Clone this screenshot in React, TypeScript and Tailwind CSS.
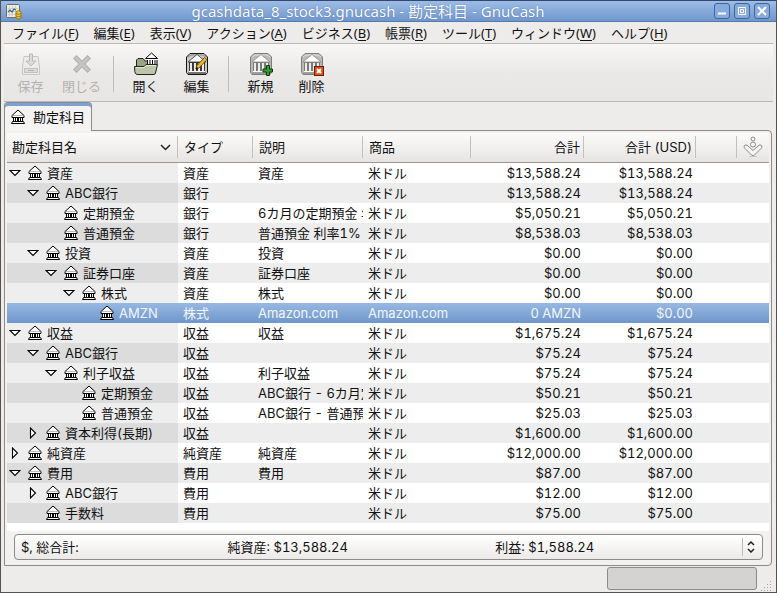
import React from "react"

interface Account {
  name: string
  depth: number
  state: "open" | "closed" | "leaf"
  type: string
  description: string
  commodity: string
  total: string
  totalUsd: string
}

const USD = "米ドル"

const accounts: Account[] = [
  { name: "資産", depth: 0, state: "open", type: "資産", description: "資産", commodity: USD, total: "$13,588.24", totalUsd: "$13,588.24" },
  { name: "ABC銀行", depth: 1, state: "open", type: "銀行", description: "", commodity: USD, total: "$13,588.24", totalUsd: "$13,588.24" },
  { name: "定期預金", depth: 2, state: "leaf", type: "銀行", description: "6カ月の定期預金 年", commodity: USD, total: "$5,050.21", totalUsd: "$5,050.21" },
  { name: "普通預金", depth: 2, state: "leaf", type: "銀行", description: "普通預金 利率1%", commodity: USD, total: "$8,538.03", totalUsd: "$8,538.03" },
  { name: "投資", depth: 1, state: "open", type: "資産", description: "投資", commodity: USD, total: "$0.00", totalUsd: "$0.00" },
  { name: "証券口座", depth: 2, state: "open", type: "資産", description: "証券口座", commodity: USD, total: "$0.00", totalUsd: "$0.00" },
  { name: "株式", depth: 3, state: "open", type: "資産", description: "株式", commodity: USD, total: "$0.00", totalUsd: "$0.00" },
  { name: "AMZN", depth: 4, state: "leaf", type: "株式", description: "Amazon.com", commodity: "Amazon.com", total: "0 AMZN", totalUsd: "$0.00" },
  { name: "収益", depth: 0, state: "open", type: "収益", description: "収益", commodity: USD, total: "$1,675.24", totalUsd: "$1,675.24" },
  { name: "ABC銀行", depth: 1, state: "open", type: "収益", description: "", commodity: USD, total: "$75.24", totalUsd: "$75.24" },
  { name: "利子収益", depth: 2, state: "open", type: "収益", description: "利子収益", commodity: USD, total: "$75.24", totalUsd: "$75.24" },
  { name: "定期預金", depth: 3, state: "leaf", type: "収益", description: "ABC銀行 - 6カ月定", commodity: USD, total: "$50.21", totalUsd: "$50.21" },
  { name: "普通預金", depth: 3, state: "leaf", type: "収益", description: "ABC銀行 - 普通預", commodity: USD, total: "$25.03", totalUsd: "$25.03" },
  { name: "資本利得(長期)", depth: 1, state: "closed", type: "収益", description: "", commodity: USD, total: "$1,600.00", totalUsd: "$1,600.00" },
  { name: "純資産", depth: 0, state: "closed", type: "純資産", description: "純資産", commodity: USD, total: "$12,000.00", totalUsd: "$12,000.00" },
  { name: "費用", depth: 0, state: "open", type: "費用", description: "費用", commodity: USD, total: "$87.00", totalUsd: "$87.00" },
  { name: "ABC銀行", depth: 1, state: "closed", type: "費用", description: "", commodity: USD, total: "$12.00", totalUsd: "$12.00" },
  { name: "手数料", depth: 1, state: "leaf", type: "費用", description: "", commodity: USD, total: "$75.00", totalUsd: "$75.00" },
]

const menus = [
  { label: "ファイル", mnemonic: "F" },
  { label: "編集", mnemonic: "E" },
  { label: "表示", mnemonic: "V" },
  { label: "アクション", mnemonic: "A" },
  { label: "ビジネス", mnemonic: "B" },
  { label: "帳票", mnemonic: "R" },
  { label: "ツール", mnemonic: "T" },
  { label: "ウィンドウ", mnemonic: "W" },
  { label: "ヘルプ", mnemonic: "H" },
]

const BankIcon = () => (
  <svg width="14" height="16" viewBox="0 0 14 16" className="shrink-0" aria-hidden="true">
    <path d="M7 1 L13 6.5 V8.5 H1 V6.5 Z" fill="#fff" stroke="#000" />
    <path d="M1 6.5 H13" stroke="#777" strokeWidth="0.5" />
    <path d="M2 9 H12 V13 H2 Z" fill="#fff" />
    <path d="M2.5 9 V13 M4.5 9 V13 M6.5 9 V13 M7.5 9 V13 M9.5 9 V13 M11.5 9 V13" stroke="#000" />
    <path d="M1.5 12.5 H12.5 L13.5 14.5 H0.5 Z" fill="#fff" stroke="#000" />
  </svg>
)

const Expander = ({ state }: { state: Account["state"] }) => {
  if (state === "leaf") return <span className="w-3 shrink-0" />
  return (
    <button type="button" className="w-3 h-3 shrink-0" aria-label={state === "open" ? "閉じる" : "開く"}>
      <svg width="12" height="12" viewBox="0 0 12 12" fill="#fff" stroke="#000" strokeWidth="1.1">
        {state === "open" ? <path d="M1 3.5 H11 L6 8.5 Z" /> : <path d="M3.5 1 V11 L8.5 6 Z" />}
      </svg>
    </button>
  )
}

const AppIcon = () => (
  <svg width="17" height="17" viewBox="0 0 17 17" className="shrink-0" aria-hidden="true">
    <rect x="1.5" y="1.5" width="13" height="13" rx="1" fill="#ecebe4" stroke="#6d6d66" />
    <path d="M4.5 3 V13 M7.5 3 V13 M10.5 3 V13 M3 5.5 H13 M3 8.5 H13 M3 11.5 H13" stroke="#cfcec7" />
    <path d="M3 9 L5 7 L7 9 L9 6 L11 7" fill="none" stroke="#3465a4" strokeWidth="1.2" />
    <path d="M11 8.5 Q13.5 7 16 8.5 V15 Q13.5 17 11 15 Z" fill="#edc52f" stroke="#8f6d0c" strokeWidth="0.8" />
    <path d="M11 10.5 Q13.5 12 16 10.5 M11 13 Q13.5 14.5 16 13" fill="none" stroke="#8f6d0c" strokeWidth="0.8" />
  </svg>
)

const SaveIcon = () => (
  <svg width="24" height="24" viewBox="0 0 24 24" aria-hidden="true">
    <path d="M5 4.5 H19 L20.5 15 V22.5 H3.5 V15 Z" fill="#ecebea" stroke="#c9c7c5" />
    <rect x="5.5" y="16.5" width="13" height="4" fill="#dddbd9" stroke="#c3c1bf" />
    <path d="M9 18.5 H15" stroke="#b5b3b1" />
    <path d="M10.5 2 H13.5 V9 H17 L12 14 L7 9 H10.5 Z" fill="#dcdad8" stroke="#bbb9b7" />
  </svg>
)

const CloseIcon = () => (
  <svg width="24" height="24" viewBox="0 0 24 24" aria-hidden="true">
    <path d="M6.5 6.5 L17.5 17.5 M17.5 6.5 L6.5 17.5" stroke="#b3b1af" strokeWidth="5" strokeLinecap="square" />
    <path d="M6.5 6.5 L17.5 17.5 M17.5 6.5 L6.5 17.5" stroke="#c6c4c2" strokeWidth="3" strokeLinecap="square" />
  </svg>
)

const OpenIcon = () => (
  <svg width="26" height="24" viewBox="0 0 26 24" aria-hidden="true">
    <path d="M3.5 21 V8 L5 6.5 H10 L12 9 H22 V21 Z" fill="#9aa387" stroke="#20241a" />
    <rect x="14" y="7" width="10" height="6" fill="#fff" />
    <path d="M18.5 1 L24.5 6.5 H12.5 Z" fill="#fff" stroke="#000" />
    <path d="M14.5 8 V13 M17 8 V13 M19.5 8 V13 M22 8 V13 M24 8 V12" stroke="#000" />
    <path d="M4 22.5 Q2 22 1.8 19.5 L1.5 14.5 H11 L13 12.5 H24.5 L22.5 21 Q22 22.5 21 22.5 Z" fill="#bcc4a9" stroke="#20241a" />
    <path d="M3 15.5 H11.5 L13.5 13.5 H23" fill="none" stroke="#e5e9da" />
  </svg>
)

const AccountIcon = ({ dark, children }: { dark?: boolean; children?: React.ReactNode }) => (
  <svg width="24" height="24" viewBox="0 0 24 24" aria-hidden="true">
    <path
      d="M5 1.5 H19 L22.5 5 V20.5 L21 22.5 H3 L1.5 20.5 V5 Z"
      fill={dark ? "#c9c9c7" : "#b9b9b7"}
      stroke={dark ? "#151515" : "#7c7c7a"}
    />
    <path d="M3 5 L6 3 H18 L21 5" fill="none" stroke={dark ? "#8a8a88" : "#dededc"} />
    <path d="M4 10 H20 V20 H4 Z" fill={dark ? "#3a3a3a" : "#7a7a78"} />
    <path d="M12 2.5 L21 10 H3 Z" fill="#fff" stroke={dark ? "#333" : "#8a8a88"} strokeWidth="0.8" />
    <path d="M6 11 V19 M10 11 V19 M14 11 V19 M18 11 V19" stroke="#ececea" strokeWidth="2" />
    <path d="M4 19.5 H20" stroke="#fff" />
    <path d="M3 21 H21" stroke={dark ? "#222" : "#868684"} />
    {children}
  </svg>
)

const EditIcon = () => (
  <AccountIcon dark>
    <path d="M11.5 14 L19.5 5.5 L22 7.5 L14 16 L11 17 Z" fill="#f0b82c" stroke="#5a3c00" strokeWidth="0.8" />
    <path d="M11 17 L12.5 15.5" stroke="#000" strokeWidth="1.5" />
  </AccountIcon>
)

const NewIcon = () => (
  <AccountIcon>
    <path d="M17.5 13.5 H20.5 V17 H23.5 V20 H20.5 V23.5 H17.5 V20 H14 V17 H17.5 Z" fill="#3c9a35" stroke="#0b3a08" />
  </AccountIcon>
)

const DeleteIcon = () => (
  <AccountIcon>
    <rect x="14.5" y="14.5" width="9" height="9" fill="#d9541e" stroke="#6d1f00" />
    <path d="M17 17 L21 21 M21 17 L17 21" stroke="#fff" strokeWidth="2" />
  </AccountIcon>
)

interface ToolButtonProps {
  label: string
  icon: React.ReactNode
  disabled?: boolean
}

const ToolButton = ({ label, icon, disabled }: ToolButtonProps) => (
  <button type="button" disabled={disabled} className="w-[51px] flex flex-col items-center disabled:text-[#b4b2b0]">
    {icon}
    <span className="leading-5">{label}</span>
  </button>
)

const ToolSeparator = () => <span className="w-px h-9 mx-1.5 mt-1 bg-[#c0bebc]" />

const WindowButton = ({ label, children }: { label: string; children: React.ReactNode }) => (
  <button
    type="button"
    aria-label={label}
    className="w-4 h-4 flex items-center justify-center rounded-[3px] border border-[#3f6498] bg-[#86abdc]"
  >
    <svg width="12" height="12" viewBox="0 0 12 12" fill="none" stroke="#fff">
      {children}
    </svg>
  </button>
)

const HeaderCell = ({ children, className = "" }: { children?: React.ReactNode; className?: string }) => (
  <th scope="col" className="p-0 font-normal">
    <div className={`h-[22px] flex items-center border-r border-[#c2c0be] whitespace-nowrap ${className}`}>{children}</div>
  </th>
)

const AccountRow = ({ account, index }: { account: Account; index: number }) => {
  const selected = account.name === "AMZN"
  const striped = index % 2 === 1
  const indents = ["pl-0.5", "pl-5", "pl-[38px]", "pl-14", "pl-[74px]"]

  const rowColor = selected
    ? "bg-linear-to-b from-[#97b8e2] to-[#7096ca] text-[#f2f6fc]"
    : striped
      ? "bg-[#ededed]"
      : "bg-white"
  const nameColor = selected ? "" : striped ? "bg-[#dcdcdc]" : "bg-[#eeeeee]"

  return (
    <tr className={`h-5 ${rowColor}`} aria-selected={selected}>
      <td className={`p-0 ${nameColor}`}>
        <div className={`flex items-center ${indents[account.depth]}`}>
          <Expander state={account.state} />
          <span className="w-[7px]" />
          <BankIcon />
          <span className="ml-[5px] whitespace-nowrap">{account.name}</span>
        </div>
      </td>
      <td className="p-0 pl-[5px] whitespace-nowrap">{account.type}</td>
      <td className="p-0 pl-[5px] overflow-hidden whitespace-nowrap">{account.description}</td>
      <td className="p-0 pl-[5px] whitespace-nowrap">{account.commodity}</td>
      <td className="p-0 pr-[3px] text-right whitespace-nowrap">{account.total}</td>
      <td className="p-0 pr-[3px] text-right whitespace-nowrap">{account.totalUsd}</td>
      <td className="p-0" />
      <td className="p-0" />
    </tr>
  )
}

const SummaryBar = () => (
  <div className="ml-[9px] mr-2 mt-[3px] mb-[5px] grid">
    <select
      aria-label="総合計"
      className="[grid-area:1/1] h-[26px] appearance-none rounded-[4px] border border-[#8d8a87] bg-linear-to-b from-white to-[#eceae8] text-transparent"
    >
      <option>$, 総合計</option>
    </select>
    <div className="[grid-area:1/1] pointer-events-none flex items-center pl-[7px] pr-2">
      <div className="flex-1 grid grid-cols-[206fr_267fr_246fr]">
        <span>$, 総合計:</span>
        <span>純資産: $13,588.24</span>
        <span>利益: $1,588.24</span>
      </div>
      <span className="w-px h-[18px] bg-[#bdbab8]" />
      <svg width="8" height="12" viewBox="0 0 8 12" className="ml-1" fill="none" stroke="#222" strokeWidth="1.5">
        <path d="M1 4 L4 1 L7 4 M1 8 L4 11 L7 8" />
      </svg>
    </div>
  </div>
)

export default function App() {
  return (
    <div className="min-h-screen flex flex-col border border-t-[#35486b] border-[#555250] bg-[#edecea] text-[13px] leading-5 text-[#111] font-[Inter,'Noto_Sans_CJK_JP',sans-serif] tabular-nums">
      {/* Title bar */}
      <header className="h-[21px] flex items-center pl-1 pr-1.5 bg-linear-to-b from-[#9dbde8] to-[#7096cb] border-b border-[#5279b0]">
        <AppIcon />
        <h1 className="flex-1 text-center text-[15px] leading-5 text-white font-['Noto_Sans','Noto_Sans_CJK_JP',sans-serif] text-shadow-[0_0_1px_#35588c]">
          gcashdata_8_stock3.gnucash - 勘定科目 - GnuCash
        </h1>
        <div className="flex gap-1">
          <WindowButton label="最小化">
            <path d="M2 8.5 H10" strokeWidth="2" />
          </WindowButton>
          <WindowButton label="最大化">
            <path d="M2.5 2.5 H9.5 V9.5 H2.5 Z M4.5 4.5 H7.5 V7.5 H4.5 Z" />
          </WindowButton>
          <WindowButton label="閉じる">
            <path d="M2 2 L10 10 M10 2 L2 10" strokeWidth="2" />
          </WindowButton>
        </div>
      </header>

      <div className="flex-1 flex flex-col px-[3px]">
        {/* Menu bar */}
        <nav className="h-[22px] flex items-center gap-px pl-px border-b border-[#bbb9b7] font-['Noto_Sans','Noto_Sans_CJK_JP',sans-serif]">
          {menus.map((menu) => (
            <button key={menu.mnemonic} type="button" className="px-[7px] whitespace-nowrap">
              {menu.label}(<u className="underline-offset-2">{menu.mnemonic}</u>)
            </button>
          ))}
        </nav>

        {/* Toolbar */}
        <div role="toolbar" className="h-[58px] flex items-start pt-2 pl-px bg-linear-to-b from-[#f7f7f5] via-[#ebe9e8] to-[#e8e6e5] border-b border-[#bbb9b7]">
          <ToolButton label="保存" icon={<SaveIcon />} disabled />
          <ToolButton label="閉じる" icon={<CloseIcon />} disabled />
          <ToolSeparator />
          <ToolButton label="開く" icon={<OpenIcon />} />
          <ToolButton label="編集" icon={<EditIcon />} />
          <ToolSeparator />
          <ToolButton label="新規" icon={<NewIcon />} />
          <ToolButton label="削除" icon={<DeleteIcon />} />
        </div>

        {/* Tabs */}
        <div role="tablist" className="flex">
          <button
            type="button"
            role="tab"
            aria-selected="true"
            className="h-[29px] -mb-px z-10 flex items-center gap-2 px-1.5 border border-b-0 border-[#8d8a87] rounded-t-[4px] bg-[#f4f3f2] shadow-[inset_0_3px_0_#7ba0d4]"
          >
            <BankIcon />
            <span>勘定科目</span>
          </button>
        </div>

        <main className="mr-px border border-[#8d8a87] rounded-r-[4px] bg-[#f2f1f0] pt-0.5">
          <div className="mx-0.5 pb-2 bg-white">
            <table className="w-full table-fixed border-collapse">
              <colgroup>
                <col />
                <col className="w-[75px]" />
                <col className="w-[110px]" />
                <col className="w-[108px]" />
                <col className="w-[113px]" />
                <col className="w-[112px]" />
                <col className="w-[41px]" />
                <col className="w-8" />
              </colgroup>
              <thead className="bg-linear-to-b from-[#fbfbfa] via-[#f1f0ef] to-[#e6e4e2]">
                <tr className="h-[29px] border-b border-[#9a9795]">
                  <HeaderCell className="justify-between pl-[5px] pr-1.5">
                    勘定科目名
                    <svg width="11" height="7" viewBox="0 0 11 7" fill="none" stroke="#222" strokeWidth="1.5">
                      <path d="M1 1 L5.5 5.5 L10 1" />
                    </svg>
                  </HeaderCell>
                  <HeaderCell className="pl-1.5">タイプ</HeaderCell>
                  <HeaderCell className="pl-1.5">説明</HeaderCell>
                  <HeaderCell className="pl-1.5">商品</HeaderCell>
                  <HeaderCell className="justify-end pr-[3px]">合計</HeaderCell>
                  <HeaderCell className="justify-end pr-[3px]">合計 (USD)</HeaderCell>
                  <HeaderCell />
                  <th className="p-0">
                    <button type="button" aria-label="列の選択" className="flex mx-auto">
                      <svg width="20" height="22" viewBox="0 0 20 22" fill="#f6f5f4" stroke="#8e8c8a">
                        <circle cx="10" cy="3" r="2" />
                        <circle cx="10" cy="8.5" r="2.5" />
                        <path d="M1 10 Q3 7.5 5 10 L10 14.5 L15 10 Q17 7.5 19 10 Q19 11.5 18 12.5 L11.5 19 Q10 20.5 8.5 19 L2 12.5 Q1 11.5 1 10 Z" />
                        <path d="M6.5 20.5 H13.5" stroke="#c4c2c0" />
                      </svg>
                    </button>
                  </th>
                </tr>
              </thead>
              <tbody>
                {accounts.map((account, index) => (
                  <AccountRow key={index} account={account} index={index} />
                ))}
              </tbody>
            </table>
          </div>
          <SummaryBar />
        </main>

        {/* Status bar */}
        <footer className="flex-1 flex items-start justify-end gap-1 pt-px pr-px">
          <div role="progressbar" aria-label="進行状況" className="w-[150px] h-[23px] rounded-[3px] border border-[#8d8a87] bg-[#d5d3d1]" />
          <svg width="11" height="11" viewBox="0 0 11 11" className="self-end" fill="#a5a2a0">
            {[0, 1, 2, 3].map((row) =>
              Array.from({ length: row + 1 }, (_, i) => <rect key={`${row}-${i}`} x={9 - i * 3} y={row * 3} width="1" height="1" />),
            )}
          </svg>
        </footer>
      </div>
    </div>
  )
}
